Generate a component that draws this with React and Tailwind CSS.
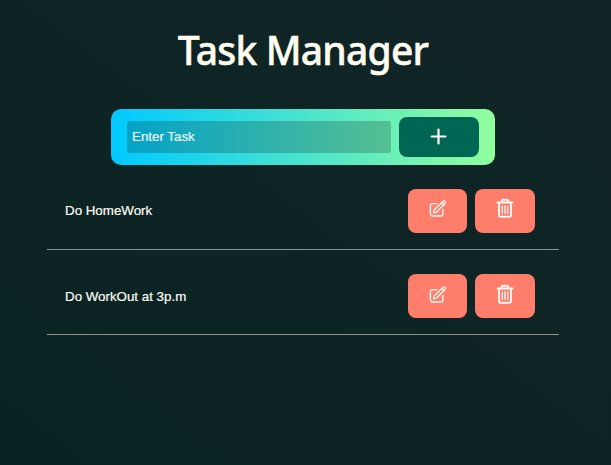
function PlusIcon() {
  return (
    <svg width="17" height="17" viewBox="0 0 17 17" fill="none" stroke="white" strokeWidth="2.2" strokeLinecap="round" className="mb-px mr-px">
      <path d="M8.5 1.6v13.8M1.6 8.5h13.8" />
    </svg>
  );
}

function EditIcon() {
  return (
    <svg width="18" height="18" viewBox="0 0 18 18" fill="none" stroke="#fff5f0" strokeWidth="1.4" strokeLinecap="round" strokeLinejoin="round">
      <path d="M8.1 3.6H3.6a2.2 2.2 0 0 0-2.2 2.2v8a2.2 2.2 0 0 0 2.2 2.2h8.1a2.2 2.2 0 0 0 2.2-2.2V9.4" />
      <path d="M4.5 12.9l.8-3.2L13.9 1.4a1.35 1.35 0 0 1 2 0l.1.1a1.4 1.4 0 0 1 0 2l-8.4 8.6-3.1.8zM12.7 2.7l2.2 2.2" />
    </svg>
  );
}

function TrashIcon() {
  return (
    <svg width="18" height="20" viewBox="0 0 18 20" fill="none" stroke="#fff8f3" strokeLinecap="round" strokeLinejoin="round">
      <path strokeWidth="1.9" d="M1.5 4.5h15M5.5 4.2v-.6C5.5 2.3 6.2 1.7 7.3 1.7h3.4c1.1 0 1.8.6 1.8 1.9v.6M3 5v12c0 1.2.7 1.8 1.8 1.8h8.4c1.1 0 1.8-.6 1.8-1.8V5" />
      <path strokeWidth="1.3" d="M6.3 7.8v7.6M9 7.8v7.6M11.7 7.8v7.6" />
    </svg>
  );
}

function Task({ title, first }) {
  return (
    <li className={`flex items-start justify-between border-b border-[#8b9693] pl-[18px] pr-6 ${first ? "h-[61px]" : "mt-6 h-[61px]"}`}>
      <span className={`text-[13.33px] leading-4 text-[#fffdf5] [-webkit-text-stroke:0.2px_#fffdf5] ${first ? "mt-[14px]" : "mt-[15px]"}`}>{title}</span>
      <div className="flex gap-2">
        <button aria-label="Edit" className={`flex h-11 w-[59px] justify-center rounded-[8px] bg-[#ff7e6b] ${first ? "pt-[11px]" : "pt-3"}`}>
          <EditIcon />
        </button>
        <button aria-label="Delete" className={`flex h-11 w-[60px] justify-center rounded-[8px] bg-[#ff7e6b] ${first ? "pt-[9px]" : "pt-[10px]"}`}>
          <TrashIcon />
        </button>
      </div>
    </li>
  );
}

export default function App() {
  return (
    <main className="flex h-[465px] w-[611px] flex-col overflow-hidden bg-[linear-gradient(to_top_right,#092323,#122526)] pl-[47px] pr-[52px] font-['Liberation_Sans',Arial,sans-serif]">
      <h1 className="mt-[22px] h-14 whitespace-nowrap text-center font-['Noto_Sans',sans-serif] text-[39px] font-medium leading-[56px] tracking-[-0.8px] text-[#fffcf0] [-webkit-text-stroke:0.5px_#fffcf0]">
        Task Manager
      </h1>
      <form className="mt-[31px] flex h-14 w-96 items-center self-center rounded-[10px] bg-[linear-gradient(to_right,#00c9ff,#92fe9d)] px-4" onSubmit={(e) => e.preventDefault()}>
        <input placeholder="Enter Task" className="h-8 w-[264px] rounded-[2px] bg-black/20 px-[5px] pb-[1px] text-[13.33px] text-white outline-none placeholder:text-[#e8fbff] [-webkit-text-stroke:0.2px_#e8fbff]" />
        <button aria-label="Add task" className="ml-2 flex h-10 w-20 items-center justify-center rounded-lg bg-[#006654]">
          <PlusIcon />
        </button>
      </form>
      <ul className="mt-6">
        <Task title="Do HomeWork" first />
        <Task title="Do WorkOut at 3p.m" />
      </ul>
    </main>
  );
}
